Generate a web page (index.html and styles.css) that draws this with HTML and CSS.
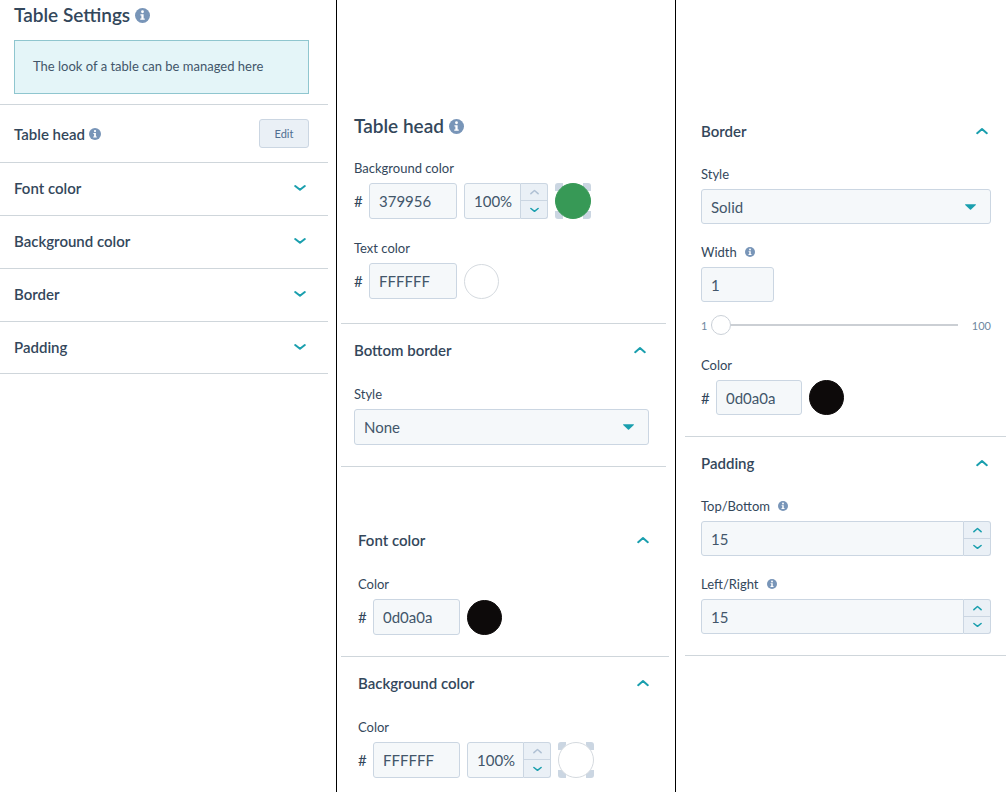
FILE: index.html
```html
<!DOCTYPE html>
<html lang="en">
<head>
<meta charset="utf-8">
<title>Table Settings</title>
<link rel="stylesheet" href="styles.css">
</head>
<body>
<svg class="sprite" aria-hidden="true">
  <symbol id="info" viewBox="0 0 16 16"><circle cx="8" cy="8" r="8" fill="#7895b8"/><circle cx="8" cy="4" r="1.5" fill="#fff"/><path d="M5.8 6.6h3.4v4.6h1.2v1.4H5.6v-1.4h1.2V8h-1z" fill="#fff"/></symbol>
  <symbol id="down" viewBox="0 0 12 8"><path d="M1.2 2 L6 5.800 L10.800 2" fill="none" stroke="currentColor" stroke-width="2" stroke-linecap="round" stroke-linejoin="round"/></symbol>
  <symbol id="up" viewBox="0 0 12 8"><path d="M1.200 6.200 L6 2 L10.800 6.200" fill="none" stroke="currentColor" stroke-width="2" stroke-linecap="round" stroke-linejoin="round"/></symbol>
  <symbol id="caret" viewBox="0 0 12 6"><path d="M0.500 0h11a.5.5 0 0 1 .3.800L6.600 5.700a.9.9 0 0 1-1.200 0L.2.800A.5.5 0 0 1 .5 0z" fill="currentColor"/></symbol>
</svg>
<main class="board">
  <section class="panel panel-list">
    <h1 class="title">Table Settings <svg class="info info-lg"><use href="#info"/></svg></h1>
    <p class="callout">The look of a table can be managed here</p>
    <div class="row row-edit">
      <h2 class="heading">Table head <svg class="info info-md"><use href="#info"/></svg></h2>
      <button class="edit" type="button">Edit</button>
    </div>
    <button class="row heading" type="button" aria-expanded="false">Font color <svg class="chevron"><use href="#down"/></svg></button>
    <button class="row heading" type="button" aria-expanded="false">Background color <svg class="chevron"><use href="#down"/></svg></button>
    <button class="row heading" type="button" aria-expanded="false">Border <svg class="chevron"><use href="#down"/></svg></button>
    <button class="row heading row-last" type="button" aria-expanded="false">Padding <svg class="chevron"><use href="#down"/></svg></button>
  </section>

  <div class="panel panel-head">
    <div class="group group-head">
      <section class="section section-top">
        <h2 class="title">Table head <svg class="info info-lg"><use href="#info"/></svg></h2>
        <div class="field">
          <label class="label" for="head-bg">Background color</label>
          <div class="line">
            <span class="hash">#</span><input class="control hex" id="head-bg" type="text" value="379956">
            <div class="stepper stepper-sm">
              <input class="control step-value" type="text" value="100%" aria-label="Background opacity">
              <button class="step step-off" type="button" aria-label="Increase"><svg class="tick"><use href="#up"/></svg></button>
              <button class="step" type="button" aria-label="Decrease"><svg class="tick"><use href="#down"/></svg></button>
            </div>
            <button class="frame" type="button" aria-label="Pick background color"><span class="swatch swatch-green"></span></button>
          </div>
        </div>
        <div class="field">
          <label class="label" for="head-text">Text color</label>
          <div class="line">
            <span class="hash">#</span><input class="control hex" id="head-text" type="text" value="FFFFFF">
            <button class="swatch swatch-white" type="button" aria-label="Pick text color"></button>
          </div>
        </div>
      </section>
      <section class="section">
        <button class="toggle heading" type="button" aria-expanded="true">Bottom border <svg class="chevron"><use href="#up"/></svg></button>
        <div class="field">
          <label class="label" for="bottom-style">Style</label>
          <div class="select"><select class="control" id="bottom-style"><option>None</option><option>Solid</option></select><svg class="caret"><use href="#caret"/></svg></div>
        </div>
      </section>
    </div>
    <div class="group group-body">
      <section class="section section-first">
        <button class="toggle heading" type="button" aria-expanded="true">Font color <svg class="chevron"><use href="#up"/></svg></button>
        <div class="field">
          <label class="label" for="font-hex">Color</label>
          <div class="line">
            <span class="hash">#</span><input class="control hex" id="font-hex" type="text" value="0d0a0a">
            <button class="swatch swatch-black" type="button" aria-label="Pick font color"></button>
          </div>
        </div>
      </section>
      <section class="section">
        <button class="toggle heading" type="button" aria-expanded="true">Background color <svg class="chevron"><use href="#up"/></svg></button>
        <div class="field">
          <label class="label" for="bg-hex">Color</label>
          <div class="line">
            <span class="hash">#</span><input class="control hex" id="bg-hex" type="text" value="FFFFFF">
            <div class="stepper stepper-sm">
              <input class="control step-value" type="text" value="100%" aria-label="Opacity">
              <button class="step step-off" type="button" aria-label="Increase"><svg class="tick"><use href="#up"/></svg></button>
              <button class="step" type="button" aria-label="Decrease"><svg class="tick"><use href="#down"/></svg></button>
            </div>
            <button class="frame" type="button" aria-label="Pick color"><span class="swatch swatch-white"></span></button>
          </div>
        </div>
      </section>
    </div>
  </div>

  <div class="panel panel-border">
    <section class="section section-first">
      <button class="toggle heading" type="button" aria-expanded="true">Border <svg class="chevron"><use href="#up"/></svg></button>
      <div class="field">
        <label class="label" for="border-style">Style</label>
        <div class="select"><select class="control" id="border-style"><option>Solid</option><option>None</option></select><svg class="caret"><use href="#caret"/></svg></div>
      </div>
      <div class="field">
        <label class="label" for="border-width">Width <svg class="info info-sm"><use href="#info"/></svg></label>
        <input class="control width-box" id="border-width" type="text" value="1">
        <div class="slider">
          <span>1</span><input class="range" type="range" min="1" max="100" value="1" aria-label="Border width"><span class="slider-max">100</span>
        </div>
      </div>
      <div class="field">
        <label class="label" for="border-hex">Color</label>
        <div class="line">
          <span class="hash">#</span><input class="control hex" id="border-hex" type="text" value="0d0a0a">
          <button class="swatch swatch-black" type="button" aria-label="Pick border color"></button>
        </div>
      </div>
    </section>
    <section class="section section-last">
      <button class="toggle heading" type="button" aria-expanded="true">Padding <svg class="chevron"><use href="#up"/></svg></button>
      <div class="field">
        <label class="label" for="pad-y">Top/Bottom <svg class="info info-sm"><use href="#info"/></svg></label>
        <div class="stepper">
          <input class="control step-value" id="pad-y" type="text" value="15">
          <button class="step" type="button" aria-label="Increase"><svg class="tick"><use href="#up"/></svg></button>
          <button class="step" type="button" aria-label="Decrease"><svg class="tick"><use href="#down"/></svg></button>
        </div>
      </div>
      <div class="field">
        <label class="label" for="pad-x">Left/Right <svg class="info info-sm"><use href="#info"/></svg></label>
        <div class="stepper">
          <input class="control step-value" id="pad-x" type="text" value="15">
          <button class="step" type="button" aria-label="Increase"><svg class="tick"><use href="#up"/></svg></button>
          <button class="step" type="button" aria-label="Decrease"><svg class="tick"><use href="#down"/></svg></button>
        </div>
      </div>
    </section>
  </div>
</main>
</body>
</html>
```
FILE: styles.css
```css
* { box-sizing: border-box; }
body {
  margin: 0;
  background: #fff;
  color: #33475b;
  font-family: Lato, "Open Sans", sans-serif;
  font-size: 13px;
}
button, input, select { font: inherit; color: inherit; margin: 0; }
button { cursor: pointer; }
svg { flex: none; display: block; }
.sprite { position: absolute; width: 0; height: 0; }

.board {
  display: grid;
  grid-template-columns: 337fr 339fr 330fr;
  min-height: 100vh;
}
.panel { min-width: 0; }
.panel-list, .panel-head { border-right: 1px solid #000; }
.panel-list { padding-right: 8px; }

.title, .heading {
  display: flex;
  align-items: center;
  margin: 0;
  font-weight: 600;
}
.title { gap: 5px; font-size: 19px; line-height: 24px; }
.heading { gap: 4px; font-size: 15px; line-height: 20px; }
.info-lg { width: 15px; height: 15px; }
.info-md { width: 12px; height: 12px; }
.info-sm { width: 10px; height: 10px; }
.chevron { width: 12px; height: 8px; color: #1a9fae; }

.panel-list .title { padding: 3px 14px 0; }
.callout {
  margin: 13px 19px 10px 14px;
  padding: 15px 18px 17px;
  border: 1px solid #8fc6cf;
  background: #e4f5f8;
  color: #42566a;
  line-height: 20px;
}
.row {
  display: flex;
  justify-content: space-between;
  width: 100%;
  height: 53px;
  padding: 0 22px 2px 14px;
  border: 0;
  border-top: 1px solid #cfd6db;
  background: none;
}
.row-edit { align-items: center; height: 58px; padding-right: 19px; padding-bottom: 0; }
.row-last { border-bottom: 1px solid #cfd6db; }
.edit {
  width: 50px;
  height: 29px;
  padding: 0;
  border: 1px solid #cbd6e2;
  border-radius: 3px;
  background: #eaf0f6;
  color: #506e91;
  font-size: 11px;
}

.panel-head { --control: 36px; --header: 54px; padding: 114px 0 13px 4px; }
.panel-border { --control: 35px; --header: 53px; padding: 105px 0 0 9px; }
.group-head { margin-right: 9px; border-bottom: 1px solid #cfd6db; }
.group-head .section { padding-left: 13px; padding-right: 17px; }
.group-body { margin: 47px 6px 0 0; }

.section { padding: 0 15px 21px 17px; border-top: 1px solid #cfd6db; }
.panel-border .section { padding-left: 16px; }
.section-first, .section-top { border-top: 0; }
.group-head .section-top { padding-bottom: 24px; }
.section-top .title { margin-bottom: 20px; }
.section-last { border-bottom: 1px solid #cfd6db; }
.toggle {
  justify-content: space-between;
  width: 100%;
  height: var(--header);
  margin-bottom: 6px;
  padding: 0 3px 2px 0;
  border: 0;
  background: none;
}
.group-body .toggle { padding-right: 5px; }

.field + .field { margin-top: 19px; }
.label { display: flex; align-items: center; gap: 8px; margin-bottom: 5px; line-height: 20px; }
.panel-border .field + .field { margin-top: 18px; }
.line { display: flex; align-items: center; gap: 7px; }
.hash { width: 8px; font-size: 15px; }
.control {
  display: block;
  width: 100%;
  height: var(--control);
  padding: 0 9px;
  border: 1px solid #cbd6e2;
  border-radius: 3px;
  background: #f5f8fa;
  font-size: 15px;
  color: #42566a;
}
.hex { width: 87px; }
.group-head .hex { width: 88px; }
.panel-border .hex { width: 86px; }
.width-box { width: 73px; }

.select { display: grid; align-items: center; }
.select > * { grid-area: 1 / 1; }
.select select { appearance: none; }
.caret { width: 11px; height: 6px; margin-right: 15px; justify-self: end; color: #1a9fae; pointer-events: none; }

.stepper {
  display: grid;
  grid-template-columns: 1fr 27px;
  grid-template-rows: 1fr 1fr;
  height: var(--control);
}
.stepper-sm { width: 84px; }
.step-value { grid-row: 1 / 3; border-radius: 3px 0 0 3px; }
.stepper-sm .step-value { padding-right: 0; }
.step {
  display: grid;
  place-items: center;
  min-height: 0;
  padding: 0;
  border: 1px solid #cbd6e2;
  border-left: 0;
  border-radius: 0 3px 0 0;
  background: #eaf0f6;
  color: #1a9fae;
}
.step:last-child { border-top: 0; border-radius: 0 0 3px 0; }
.step-off { color: #b0c1d4; }
.tick { width: 9px; height: 6px; }

.frame {
  width: 36px;
  height: 36px;
  padding: 0;
  border: 0;
  border-radius: 3px;
  background: conic-gradient(#cbd6e2 0 0) 0 0 / 8px 8px no-repeat,
    conic-gradient(#cbd6e2 0 0) 100% 0 / 8px 8px no-repeat,
    conic-gradient(#cbd6e2 0 0) 0 100% / 8px 8px no-repeat,
    conic-gradient(#cbd6e2 0 0) 100% 100% / 8px 8px no-repeat;
}
.swatch {
  display: block;
  width: 35px;
  height: 35px;
  padding: 0;
  border: 1px solid #d5dadf;
  border-radius: 50%;
}
.frame .swatch { width: 36px; height: 36px; }
.swatch-green { background: #379956; border-color: #379956; }
.swatch-white { background: #fff; }
.swatch-black { background: #0d0a0a; border-color: #0d0a0a; }

.slider { display: flex; align-items: center; gap: 4px; height: 20px; margin-top: 13px; margin-bottom: 20px; font-size: 11px; color: #6f879f; }
.slider-max { margin-left: 10px; }
.range { flex: 1; min-width: 0; height: 20px; appearance: none; background: none; }
.range::-webkit-slider-runnable-track { height: 2px; background: #cbcfd4; }
.range::-webkit-slider-thumb {
  appearance: none;
  width: 20px;
  height: 20px;
  margin-top: -9px;
  border: 1px solid #cbd1d8;
  border-radius: 50%;
  background: #fff;
}
```
